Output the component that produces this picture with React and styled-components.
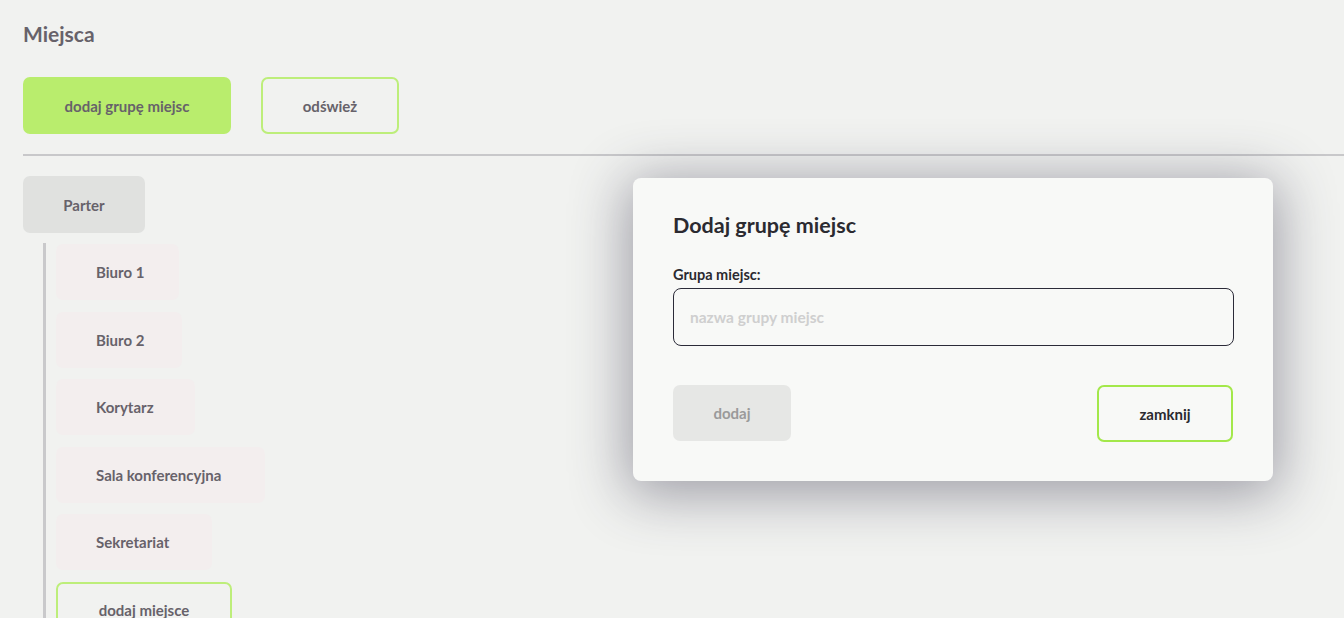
import React from "react";
import styled, { createGlobalStyle } from "styled-components";

const Global = createGlobalStyle`
  html, body { margin: 0; padding: 0; background: #f1f2f0; }
  body { font-family: Lato, "Noto Sans", sans-serif; overflow: hidden; }
  * { box-sizing: border-box; }
`;

const Page = styled.div`
  position: relative;
  width: 1344px;
  height: 618px;
  padding: 21px 0 0 23px;
  overflow: hidden;
  color: #67626a;
`;

const Title = styled.h1`
  margin: 0;
  font-size: 21px;
  font-weight: 700;
  line-height: 25px;
  color: #67626a;
`;

const Toolbar = styled.div`
  display: flex;
  gap: 30px;
  margin-top: 31px;
`;

const Button = styled.button`
  height: ${(p) => p.$h || 57}px;
  width: ${(p) => p.$w}px;
  border-radius: 7px;
  font-family: inherit;
  font-size: 15px;
  font-weight: 700;
  color: ${(p) => p.$color || "#67626a"};
  background: ${(p) =>
    p.$variant === "primary" ? "#b9ed6d" : p.$variant === "disabled" ? "#e6e7e5" : "transparent"};
  border: ${(p) => (p.$variant === "outline" ? `2px solid ${p.$border || "#bdee7a"}` : "none")};
  padding: 0;
  cursor: pointer;
`;

const Divider = styled.hr`
  margin: 20px 0 0 0;
  border: none;
  height: 2px;
  background: #c8c8ca;
`;

const Tree = styled.div`
  margin-top: 20px;
  display: flex;
  flex-direction: column;
`;

const GroupBox = styled.div`
  width: 122px;
  height: 57px;
  border-radius: 7px;
  background: #e0e1df;
  display: flex;
  align-items: center;
  justify-content: center;
  font-size: 15px;
  font-weight: 700;
`;

const Children = styled.div`
  margin: 10px 0 0 20px;
  border-left: 3px solid #c9c9cb;
  padding-left: 10px;
  display: flex;
  flex-direction: column;
  align-items: flex-start;
  gap: 11.5px;
  padding-top: 1px;
  padding-bottom: 20px;
`;

const Place = styled.div`
  height: 56px;
  width: ${(p) => p.$w}px;
  border-radius: 7px;
  background: #f3eeee;
  display: flex;
  align-items: center;
  padding-left: 40px;
  font-size: 15px;
  font-weight: 700;
`;

const AddPlace = styled.button`
  height: 57px;
  width: 176px;
  border-radius: 7px;
  border: 2px solid #bdee7a;
  background: transparent;
  font-family: inherit;
  font-size: 15px;
  font-weight: 700;
  color: #67626a;
  padding: 0;
`;

const Modal = styled.div`
  position: absolute;
  left: 633px;
  top: 178px;
  width: 640px;
  height: 303px;
  background: #f8f9f7;
  border-radius: 8px;
  box-shadow: 0 8px 55px 6px rgba(52, 50, 72, 0.44);
  padding: 33px 40px 0 40px;
  color: #2b2a30;
`;

const ModalTitle = styled.h2`
  margin: 0;
  font-size: 21.5px;
  font-weight: 700;
  line-height: 28px;
`;

const Label = styled.label`
  display: block;
  margin-top: 27px;
  font-size: 14.5px;
  font-weight: 700;
  line-height: 18px;
`;

const Input = styled.input`
  display: block;
  margin-top: 4px;
  width: 561px;
  height: 58px;
  border: 1.5px solid #2b2b38;
  border-radius: 8px;
  background: transparent;
  padding: 0 16px;
  font-family: inherit;
  font-size: 15.5px;
  font-weight: 700;
  color: #2b2a30;
  outline: none;
  &::placeholder { color: #cfcfcf; }
`;

const Actions = styled.div`
  margin-top: 39px;
  display: flex;
  justify-content: space-between;
`;

const places = [
  { name: "Biuro 1", w: 123 },
  { name: "Biuro 2", w: 126 },
  { name: "Korytarz", w: 139 },
  { name: "Sala konferencyjna", w: 209 },
  { name: "Sekretariat", w: 156 },
];

export default function App() {
  return (
    <>
      <Global />
      <Page>
        <Title>Miejsca</Title>
        <Toolbar>
          <Button $variant="primary" $w={208}>dodaj grupę miejsc</Button>
          <Button $variant="outline" $w={138}>odśwież</Button>
        </Toolbar>
        <Divider />
        <Tree>
          <GroupBox>Parter</GroupBox>
          <Children>
            {places.map((p) => (
              <Place key={p.name} $w={p.w}>{p.name}</Place>
            ))}
            <AddPlace>dodaj miejsce</AddPlace>
          </Children>
        </Tree>
        <Modal>
          <ModalTitle>Dodaj grupę miejsc</ModalTitle>
          <Label htmlFor="grp">Grupa miejsc:</Label>
          <Input id="grp" placeholder="nazwa grupy miejsc" autoFocus />
          <Actions>
            <Button $variant="disabled" $w={118} $h={56} $color="#9a9a9a" disabled>dodaj</Button>
            <Button $variant="outline" $w={136} $h={57} $border="#a3e84a" $color="#2b2a30">zamknij</Button>
          </Actions>
        </Modal>
      </Page>
    </>
  );
}
